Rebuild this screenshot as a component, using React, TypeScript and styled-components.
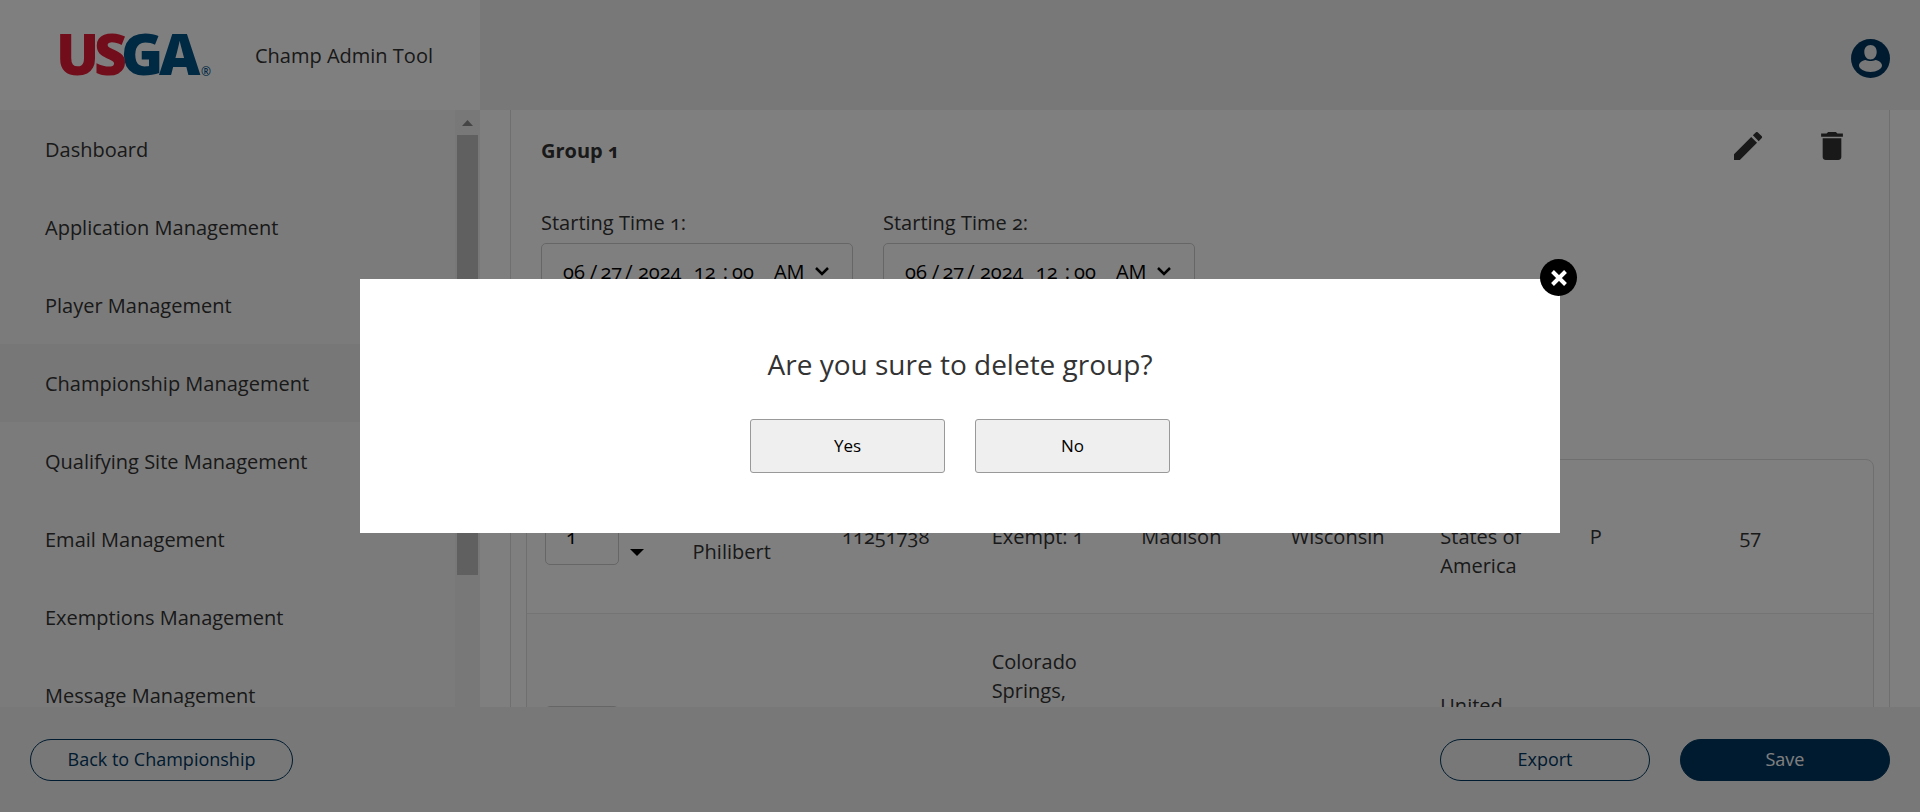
import React from "react";
import styled, { createGlobalStyle } from "styled-components";

const GlobalStyle = createGlobalStyle`
  *, *::before, *::after { box-sizing: border-box; }
  body {
    margin: 0;
    overflow: hidden;
    font-family: "Open Sans", "Noto Sans", sans-serif;
    font-size: 20px;
    line-height: 29px;
    font-variant-numeric: oldstyle-nums;
    color: #333;
    background: #fff;
  }
  button, input, select { font: inherit; font-variant-numeric: inherit; }
`;

const Page = styled.div`
  display: grid;
  grid-template-rows: 110px minmax(0, 1fr) 105px;
  height: 100vh;
`;

const Header = styled.header`
  display: flex;
  background: #f0f0f0;
`;

const Brand = styled.div`
  display: flex;
  align-items: center;
  gap: 39px;
  width: 480px;
  padding-left: 56px;
  background: #fff;
`;

const ProductName = styled.span`
  font-size: 20px;
`;

const Account = styled.button`
  display: flex;
  margin: 39px 30px 0 auto;
  padding: 0;
  border: 0;
  background: none;
  align-self: flex-start;
`;

const Body = styled.div`
  display: flex;
  min-height: 0;
`;

const Sidebar = styled.aside`
  display: flex;
  flex: none;
  width: 480px;
  background: #f7f7f7;
`;

const Nav = styled.nav`
  flex: 1;
  overflow: hidden;
`;

const NavLink = styled.a<{ $active?: boolean }>`
  display: flex;
  align-items: center;
  height: 78px;
  padding-left: 45px;
  color: inherit;
  text-decoration: none;
  background: ${(p) => (p.$active ? "#eeeeee" : "transparent")};
`;

const ScrollRail = styled.div`
  display: flex;
  flex-direction: column;
  width: 25px;
  padding: 0 2px;
  background: #f1f1f1;
`;

const ScrollArrow = styled.div`
  display: flex;
  align-items: center;
  justify-content: center;
  flex: none;
  height: 25px;
`;

const ScrollThumb = styled.div`
  flex: 10;
  background: #c1c1c1;
`;

const ScrollRest = styled.div`
  flex: 3;
`;

const Main = styled.main`
  flex: 1;
  min-width: 0;
  padding: 0 30px;
  overflow: hidden;
`;

const GroupPanel = styled.section`
  min-height: 100%;
  padding: 22px 15px 0;
  border: solid #dedede;
  border-width: 0 1px;
`;

const GroupHead = styled.div`
  display: flex;
  justify-content: space-between;
  padding: 0 23px 0 15px;
`;

const GroupTitle = styled.h2`
  margin: 4px 0 0;
  font-size: 20px;
  line-height: 29px;
`;

const GroupActions = styled.div`
  display: flex;
  gap: 46px;
`;

const IconButton = styled.button`
  display: flex;
  padding: 0;
  border: 0;
  background: none;
  color: #333;
`;

const Times = styled.div`
  display: flex;
  gap: 30px;
  padding: 43px 15px 0;
`;

const TimeField = styled.fieldset`
  width: 312px;
  min-width: 0;
  margin: 0;
  padding: 0;
  border: 0;
`;

const TimeLabel = styled.legend`
  padding: 0 0 6px;
`;

const PickerBox = styled.div`
  display: flex;
  align-items: center;
  height: 57px;
  padding-left: 16px;
  border: 1px solid #ccc;
  border-radius: 5px;
  color: #000;
`;

const Segment = styled.input<{ $width: number }>`
  width: ${(p) => p.$width}px;
  padding: 0;
  border: 0;
  background: none;
  text-align: center;
  color: #000;
`;

const Meridiem = styled.select`
  width: 36px;
  margin-left: 16px;
  padding: 0;
  border: 0;
  background: none;
  appearance: none;
  color: #000;
`;

const Players = styled.div`
  margin-top: 159px;
  border: 1px solid #dedede;
  border-radius: 8px;
`;

const PlayerTable = styled.table`
  width: 100%;
  table-layout: fixed;
  border-collapse: collapse;
`;

const PlayerRow = styled.tr`
  & + & {
    border-top: 1px solid #e8e8e8;
    background: #fafafa;
  }
`;

const Cell = styled.td`
  padding: 33px 16px;
  vertical-align: middle;

  &:first-child {
    padding-left: 18px;
  }
`;

const OrderField = styled.div`
  display: flex;
  align-items: center;
  gap: 11px;
`;

const OrderInput = styled.input`
  width: 74px;
  height: 57px;
  padding: 0 0 0 20px;
  border: 1px solid #ccc;
  border-radius: 5px;
  background: none;
  color: #000;
`;

const OrderArrow = styled.svg`
  margin-top: 32px;
`;

const Footer = styled.footer`
  display: flex;
  align-items: center;
  gap: 30px;
  padding: 0 30px;
  background: #f0f0f0;
`;

const PillButton = styled.button<{ $filled?: boolean; $wide?: boolean }>`
  width: ${(p) => (p.$wide ? 263 : 210)}px;
  height: 42px;
  padding: 0 0 2px;
  border: 1px solid #00365f;
  border-radius: 21px;
  font-size: 18px;
  line-height: 24px;
  font-weight: ${(p) => (p.$filled ? 500 : 400)};
  color: ${(p) => (p.$filled ? "#fff" : "#00365f")};
  background: ${(p) => (p.$filled ? "#00365f" : "transparent")};
`;

const Spacer = styled.div`
  flex: 1;
`;

const Overlay = styled.div`
  position: fixed;
  inset: 0;
  display: flex;
  align-items: center;
  justify-content: center;
  background: rgba(0, 0, 0, 0.5);
`;

const Dialog = styled.div`
  position: relative;
  display: flex;
  flex-direction: column;
  align-items: center;
  width: 62.5%;
  padding: 63px 60px 60px;
  background: #fff;
`;

const DialogTitle = styled.h1`
  margin: 0 0 33px;
  font-size: 28px;
  line-height: 44px;
  font-weight: 400;
`;

const DialogActions = styled.div`
  display: flex;
  gap: 30px;
`;

const DialogButton = styled.button`
  width: 195px;
  height: 54px;
  border: 1px solid #999;
  border-radius: 3px;
  background: #efefef;
  color: #000;
  font-size: 17px;
  line-height: 24px;
  font-weight: 500;
`;

const CloseButton = styled.button`
  position: absolute;
  top: -20px;
  right: -17px;
  display: flex;
  align-items: center;
  justify-content: center;
  width: 37px;
  height: 37px;
  padding: 0;
  border: 0;
  border-radius: 50%;
  background: #000;
`;

const navItems = [
  "Dashboard",
  "Application Management",
  "Player Management",
  "Championship Management",
  "Qualifying Site Management",
  "Email Management",
  "Exemptions Management",
  "Message Management",
];

const players = [
  ["Dan Philibert", "11251738", "Exempt: 1", "Madison", "Wisconsin", "United States of America", "P", "57"],
  ["", "", "Colorado Springs, Colorado Local Qualifier Site: 2", "", "", "United States of America", "", ""],
];

function Logo() {
  return (
    <svg width="160" height="80" viewBox="-4 -18 160 80" role="img" aria-label="USGA">
      <g fontFamily="Open Sans, sans-serif" fontWeight="800" fontSize="57">
        <g fill="#005288">
          <text x="61" y="42">G</text>
          <text x="99" y="42">A</text>
        </g>
        <g fill="#e41b36">
          <text x="-4" y="42">U</text>
          <text x="34" y="42">S</text>
        </g>
      </g>
      <text x="141" y="43" fontFamily="Open Sans, sans-serif" fontSize="12" fontWeight="600" fill="#005288">®</text>
    </svg>
  );
}

function DateTimeField({ label }: { label: string }) {
  return (
    <TimeField>
      <TimeLabel>{label}</TimeLabel>
      <PickerBox>
        <Segment $width={32} aria-label="Month" defaultValue="06" />
        /
        <Segment $width={28} aria-label="Day" defaultValue="27" />
        /
        <Segment $width={54} aria-label="Year" defaultValue="2024" />
        <Segment $width={36} aria-label="Hour" defaultValue="12" />
        :
        <Segment $width={30} aria-label="Minute" defaultValue="00" />
        <Meridiem aria-label="AM or PM" defaultValue="AM">
          <option>AM</option>
          <option>PM</option>
        </Meridiem>
        <svg width="24" height="16" viewBox="0 0 24 16" aria-hidden="true">
          <path d="M6 4l6 6 6-6" fill="none" stroke="#000" strokeWidth="2.5" />
        </svg>
      </PickerBox>
    </TimeField>
  );
}

export default function App() {
  return (
    <>
      <GlobalStyle />
      <Page>
        <Header>
          <Brand>
            <Logo />
            <ProductName>Champ Admin Tool</ProductName>
          </Brand>
          <Account aria-label="Account">
            <svg width="39" height="39" viewBox="0 0 39 39" aria-hidden="true">
              <circle cx="19.500" cy="19.500" r="19.500" fill="#00365f" />
              <path
                d="M19.500 6c4 0 6.200 3 6.200 7s-2.400 7.500-6.200 7.500-6.200-3.500-6.200-7.500 2.200-7 6.200-7zM14.500 21c2 .8 3 1 5 1s3-.2 5-1c3.500.3 6.500 3 6.500 5.500 0 3.500-5.500 6.500-11.500 6.500S8 30 8 26.500c0-2.500 3-5.200 6.500-5.500z"
                fill="#f0f0f0"
              />
            </svg>
          </Account>
        </Header>

        <Body>
          <Sidebar>
            <Nav aria-label="Main">
              {navItems.map((item) => (
                <NavLink key={item} href="#" $active={item === "Championship Management"}>
                  {item}
                </NavLink>
              ))}
            </Nav>
            <ScrollRail aria-hidden="true">
              <ScrollArrow>
                <svg width="11" height="6" viewBox="0 0 11 6">
                  <path d="M5.500 0L11 6H0z" fill="#8b8b8b" />
                </svg>
              </ScrollArrow>
              <ScrollThumb />
              <ScrollRest />
            </ScrollRail>
          </Sidebar>

          <Main>
            <GroupPanel>
              <GroupHead>
                <GroupTitle>Group 1</GroupTitle>
                <GroupActions>
                  <IconButton aria-label="Edit group">
                    <svg width="38" height="28" viewBox="0 3 24 18" fill="currentColor" aria-hidden="true">
                      <path d="M3 17.250V21h3.750L17.810 9.940l-3.750-3.750L3 17.250zM20.710 7.040a1 1 0 0 0 0-1.410l-2.340-2.340a1 1 0 0 0-1.410 0l-1.830 1.830 3.750 3.750 1.830-1.830z" />
                    </svg>
                  </IconButton>
                  <IconButton aria-label="Delete group">
                    <svg width="38" height="28" viewBox="0 3 24 18" fill="currentColor" aria-hidden="true">
                      <path d="M6 19c0 1.100.9 2 2 2h8c1.100 0 2-.9 2-2V7H6v12zM19 4h-3.500l-1-1h-5l-1 1H5v2h14V4z" />
                    </svg>
                  </IconButton>
                </GroupActions>
              </GroupHead>

              <Times>
                <DateTimeField label="Starting Time 1:" />
                <DateTimeField label="Starting Time 2:" />
              </Times>

              <Players>
                <PlayerTable>
                  <tbody>
                    {players.map((cells, row) => (
                      <PlayerRow key={row}>
                        <Cell>
                          <OrderField>
                            <OrderInput aria-label="Order" defaultValue={row + 1} />
                            <OrderArrow width="14" height="7" viewBox="0 0 14 7" aria-hidden="true">
                              <path d="M0 0h14L7 7z" />
                            </OrderArrow>
                          </OrderField>
                        </Cell>
                        {cells.map((text, i) => (
                          <Cell key={i}>{text}</Cell>
                        ))}
                      </PlayerRow>
                    ))}
                  </tbody>
                </PlayerTable>
              </Players>
            </GroupPanel>
          </Main>
        </Body>

        <Footer>
          <PillButton $wide>Back to Championship</PillButton>
          <Spacer />
          <PillButton>Export</PillButton>
          <PillButton $filled>Save</PillButton>
        </Footer>
      </Page>

      <Overlay>
        <Dialog role="dialog" aria-modal="true" aria-labelledby="confirm-title">
          <DialogTitle id="confirm-title">Are you sure to delete group?</DialogTitle>
          <DialogActions>
            <DialogButton>Yes</DialogButton>
            <DialogButton>No</DialogButton>
          </DialogActions>
          <CloseButton aria-label="Close">
            <svg width="18" height="18" viewBox="0 0 18 18" aria-hidden="true">
              <path d="M2.500 2.500l13 13M15.500 2.500l-13 13" stroke="#fff" strokeWidth="4" />
            </svg>
          </CloseButton>
        </Dialog>
      </Overlay>
    </>
  );
}
